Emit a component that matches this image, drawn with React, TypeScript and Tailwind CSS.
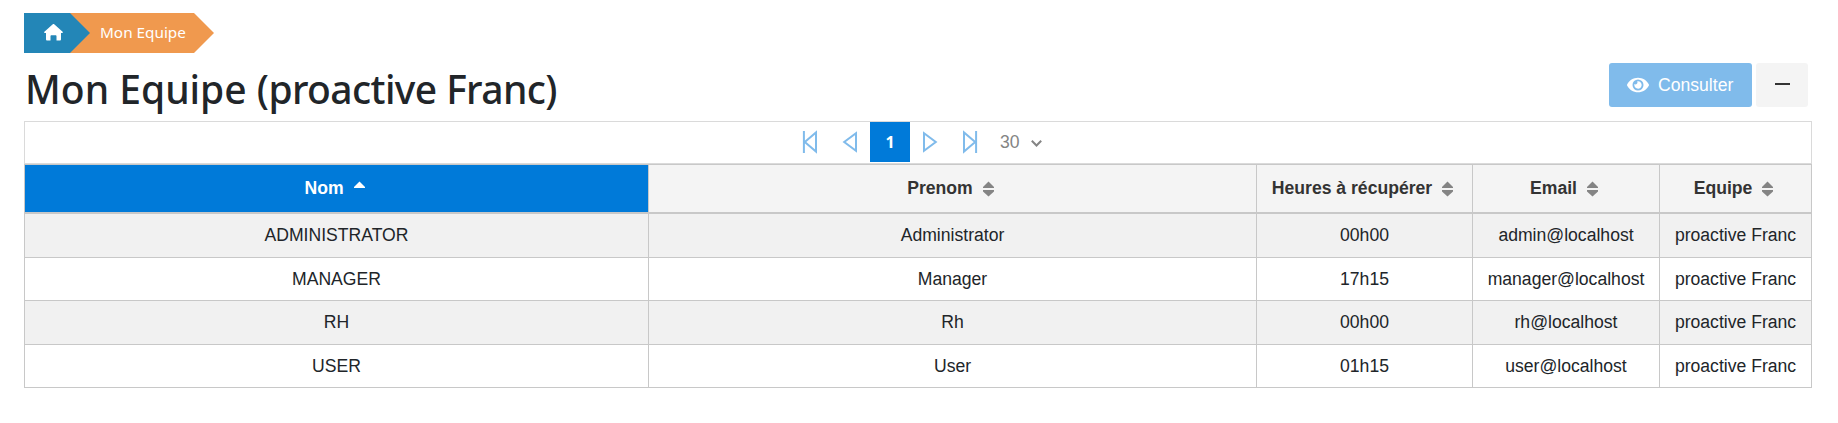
import React from "react";
import { FaEye } from "react-icons/fa";

const rows = [
  { h: "h-[44px]", bg: "bg-[#f1f1f1]", cells: ["ADMINISTRATOR", "Administrator", "00h00", "admin@localhost", "proactive Franc"] },
  { h: "h-[43px]", bg: "bg-white", cells: ["MANAGER", "Manager", "17h15", "manager@localhost", "proactive Franc"] },
  { h: "h-[44px]", bg: "bg-[#f1f1f1]", cells: ["RH", "Rh", "00h00", "rh@localhost", "proactive Franc"] },
  { h: "h-[43px]", bg: "bg-white", cells: ["USER", "User", "01h15", "user@localhost", "proactive Franc"] },
];
const heads = ["Nom", "Prenom", "Heures à récupérer", "Email", "Equipe"];
const cols = "grid grid-cols-[624px_608px_216px_187px_152px]";

function SortIcon({ asc }: { asc?: boolean }) {
  return (
    <svg className="ml-[10px] h-4 w-[11px] shrink-0" viewBox="0 0 11 16" fill={asc ? "#fff" : "#848484"}>
      <path d="M5.5 0.4 11 5.900V7H0V5.900z" />
      {!asc && <path d="M5.500 15.600 11 10.400V9H0v1.400z" />}
    </svg>
  );
}

function PagerIcon({ d }: { d: string }) {
  return (
    <svg className="h-10 w-10" viewBox="0 0 40 40" fill="none" stroke="#80bbeb" strokeWidth="2">
      <path d={d} />
    </svg>
  );
}

export default function App() {
  return (
    <div className="h-[423px] w-[1838px] bg-white pt-[13px] pl-6 font-['Liberation_Sans',Arial,sans-serif] text-[17.6px] text-[#212529]">
      <nav className="flex h-10">
        <div className="z-10 flex w-[66px] items-center bg-[#2386b7] pl-5 [clip-path:polygon(0_0,46px_0,100%_50%,46px_100%,0_100%)]">
          <svg className="-mt-[2px] h-[17px] w-[19px]" viewBox="0 0 19 17" fill="#fff">
            <path d="M8.8.3a1 1 0 0 1 1.4 0l8.4 7.4c.6.6.3 1.3-.5 1.3H17v6.2c0 .8-.5 1.3-1.3 1.3h-3.2v-4.3c0-.6-.4-1-1-1h-4c-.6 0-1 .4-1 1v4.3H3.3c-.8 0-1.3-.5-1.3-1.3V9H.9C.1 9-.2 8.300.4 7.700z" />
          </svg>
        </div>
        <div className="-ml-5 flex w-[144px] items-center bg-[#f0994e] pb-px pl-[30px] font-['Noto_Sans',sans-serif] text-[15.3px] text-white [clip-path:polygon(0_0,124px_0,100%_50%,124px_100%,0_100%)]">
          <span className="whitespace-nowrap">Mon Equipe</span>
        </div>
      </nav>

      <header className="flex h-[68px] w-[1784px] items-start justify-between">
        <h1 className="mt-[9px] -ml-px pl-[2px] font-['Noto_Sans',sans-serif] text-[39px] leading-[54px] font-medium whitespace-nowrap">
          Mon Equipe <span className="tracking-[-0.6px]">(proactive Franc)</span>
        </h1>
        <div className="mt-[10px] flex gap-1">
          <button className="flex h-11 w-[143px] items-center rounded-[3px] bg-[#80bbeb] pl-[18px] text-white">
            <FaEye className="mr-[9px] h-[22px] w-[22px]" />
            Consulter
          </button>
          <button className="flex h-11 w-[52px] items-center justify-center rounded-[3px] bg-[#f4f4f4]">
            <span className="-mt-[2px] h-[2px] w-[15px] bg-[#333]" />
          </button>
        </div>
      </header>

      <main className="w-[1788px]">
        <div className="flex h-[43px] border border-[#dadada] pl-[765px]">
          <PagerIcon d="M13.900 9v22M26 10.500v19L14.800 20z" />
          <PagerIcon d="M26 11.200v17.600L14.200 20z" />
          <div className="flex h-10 w-10 items-center justify-center bg-[#007ad9] font-['Noto_Sans',sans-serif] text-base font-bold text-white">1</div>
          <PagerIcon d="M14 11.200v17.600L25.800 20z" />
          <PagerIcon d="M26.100 9v22M14 10.500v19L25.200 20z" />
          <div className="flex h-10 items-center pl-[10px] text-[#848484]">
            30
            <svg className="mt-[2px] ml-[11px] h-[7px] w-[11px]" viewBox="0 0 11 7" fill="none" stroke="#848484" strokeWidth="2">
              <path d="M.8.8 5.500 5.500 10.200.8" />
            </svg>
          </div>
        </div>

        <div className="border-t border-l border-[#c8c8c8]">
          <div className={`${cols} h-[49px]`}>
            {heads.map((t, i) => (
              <div
                key={t}
                className={`flex items-center justify-center border-r border-b-2 border-[#c8c8c8] pr-[4px] font-bold whitespace-nowrap ${i === 0 ? "bg-[#007ad9] text-white" : "bg-[#f4f4f4] text-[#333]"}`}
              >
                {t}
                <SortIcon asc={i === 0} />
              </div>
            ))}
          </div>
          {rows.map((r) => (
            <div key={r.cells[0]} className={`${cols} ${r.h} ${r.bg}`}>
              {r.cells.map((c, i) => (
                <div key={i} className="flex items-center justify-center border-r border-b border-[#c8c8c8] whitespace-nowrap">
                  {c}
                </div>
              ))}
            </div>
          ))}
        </div>
      </main>
    </div>
  );
}
